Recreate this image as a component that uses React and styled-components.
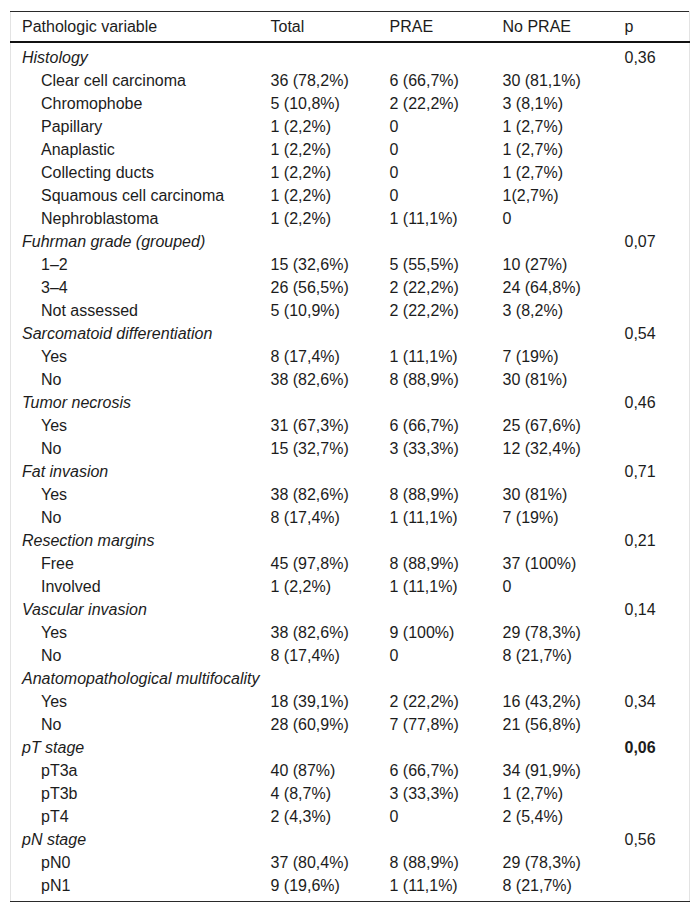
import React from 'react';
import styled, { createGlobalStyle } from 'styled-components';

const INK = '#1c1c1c';
const RULE = '#2a2a2a';
const SIDE = '#e3e3e3';

const GlobalStyle = createGlobalStyle`
  body {
    margin: 0;
    background: #fff;
    font-family: "Liberation Sans", Arial, sans-serif;
    color: ${INK};
  }
`;

const groups = [
  {
    name: 'Histology', p: '0,36',
    rows: [
      ['Clear cell carcinoma', '36 (78,2%)', '6 (66,7%)', '30 (81,1%)'],
      ['Chromophobe', '5 (10,8%)', '2 (22,2%)', '3 (8,1%)'],
      ['Papillary', '1 (2,2%)', '0', '1 (2,7%)'],
      ['Anaplastic', '1 (2,2%)', '0', '1 (2,7%)'],
      ['Collecting ducts', '1 (2,2%)', '0', '1 (2,7%)'],
      ['Squamous cell carcinoma', '1 (2,2%)', '0', '1(2,7%)'],
      ['Nephroblastoma', '1 (2,2%)', '1 (11,1%)', '0'],
    ],
  },
  {
    name: 'Fuhrman grade (grouped)', p: '0,07',
    rows: [
      ['1–2', '15 (32,6%)', '5 (55,5%)', '10 (27%)'],
      ['3–4', '26 (56,5%)', '2 (22,2%)', '24 (64,8%)'],
      ['Not assessed', '5 (10,9%)', '2 (22,2%)', '3 (8,2%)'],
    ],
  },
  {
    name: 'Sarcomatoid differentiation', p: '0,54',
    rows: [
      ['Yes', '8 (17,4%)', '1 (11,1%)', '7 (19%)'],
      ['No', '38 (82,6%)', '8 (88,9%)', '30 (81%)'],
    ],
  },
  {
    name: 'Tumor necrosis', p: '0,46',
    rows: [
      ['Yes', '31 (67,3%)', '6 (66,7%)', '25 (67,6%)'],
      ['No', '15 (32,7%)', '3 (33,3%)', '12 (32,4%)'],
    ],
  },
  {
    name: 'Fat invasion', p: '0,71',
    rows: [
      ['Yes', '38 (82,6%)', '8 (88,9%)', '30 (81%)'],
      ['No', '8 (17,4%)', '1 (11,1%)', '7 (19%)'],
    ],
  },
  {
    name: 'Resection margins', p: '0,21',
    rows: [
      ['Free', '45 (97,8%)', '8 (88,9%)', '37 (100%)'],
      ['Involved', '1 (2,2%)', '1 (11,1%)', '0'],
    ],
  },
  {
    name: 'Vascular invasion', p: '0,14',
    rows: [
      ['Yes', '38 (82,6%)', '9 (100%)', '29 (78,3%)'],
      ['No', '8 (17,4%)', '0', '8 (21,7%)'],
    ],
  },
  {
    name: 'Anatomopathological multifocality', p: '',
    rows: [
      ['Yes', '18 (39,1%)', '2 (22,2%)', '16 (43,2%)', '0,34'],
      ['No', '28 (60,9%)', '7 (77,8%)', '21 (56,8%)'],
    ],
  },
  {
    name: 'pT stage', p: '0,06', bold: true,
    rows: [
      ['pT3a', '40 (87%)', '6 (66,7%)', '34 (91,9%)'],
      ['pT3b', '4 (8,7%)', '3 (33,3%)', '1 (2,7%)'],
      ['pT4', '2 (4,3%)', '0', '2 (5,4%)'],
    ],
  },
  {
    name: 'pN stage', p: '0,56',
    rows: [
      ['pN0', '37 (80,4%)', '8 (88,9%)', '29 (78,3%)'],
      ['pN1', '9 (19,6%)', '1 (11,1%)', '8 (21,7%)'],
    ],
  },
];

const Frame = styled.div`
  width: 679px;
  margin: 11px 0 0 10px;
`;

const Table = styled.table`
  width: 100%;
  border-collapse: collapse;
  table-layout: fixed;
  border-top: 1px solid ${RULE};
  border-bottom: 1px solid ${RULE};
  border-left: 1px solid ${SIDE};
  border-right: 1px solid ${SIDE};
  font-size: 16px;
`;

const HeadCell = styled.th`
  box-sizing: border-box;
  text-align: left;
  font-weight: normal;
  padding: 5px 0 5px 11px;
  line-height: 19px;
  border-bottom: 2px solid #111;
  width: ${p => p.$w}px;
`;

const Body = styled.tbody`
  tr:first-child td { padding-top: 4.5px; }
  tr:last-child td { padding-bottom: 6.5px; }
`;

const Cell = styled.td`
  padding: 2px 0 2px ${p => (p.$indent ? 30 : 11)}px;
  line-height: 19px;
  white-space: nowrap;
  font-style: ${p => (p.$italic ? 'italic' : 'normal')};
  font-weight: ${p => (p.$bold ? 'bold' : 'normal')};
`;

const widths = [249, 119, 113, 122, 76];
const heads = ['Pathologic variable', 'Total', 'PRAE', 'No PRAE', 'p'];

export default function App() {
  return (
    <>
      <GlobalStyle />
      <Frame>
        <Table>
          <thead>
            <tr>
              {heads.map((h, i) => (
                <HeadCell key={h} $w={widths[i]}>{h}</HeadCell>
              ))}
            </tr>
          </thead>
          <Body>
            {groups.map(g => (
              <React.Fragment key={g.name}>
                <tr>
                  <Cell $italic colSpan={4}>{g.name}</Cell>
                  <Cell $bold={g.bold}>{g.p}</Cell>
                </tr>
                {g.rows.map(r => (
                  <tr key={g.name + r[0]}>
                    <Cell $indent>{r[0]}</Cell>
                    <Cell>{r[1]}</Cell>
                    <Cell>{r[2]}</Cell>
                    <Cell>{r[3]}</Cell>
                    <Cell>{r[4] || ''}</Cell>
                  </tr>
                ))}
              </React.Fragment>
            ))}
          </Body>
        </Table>
      </Frame>
    </>
  );
}
